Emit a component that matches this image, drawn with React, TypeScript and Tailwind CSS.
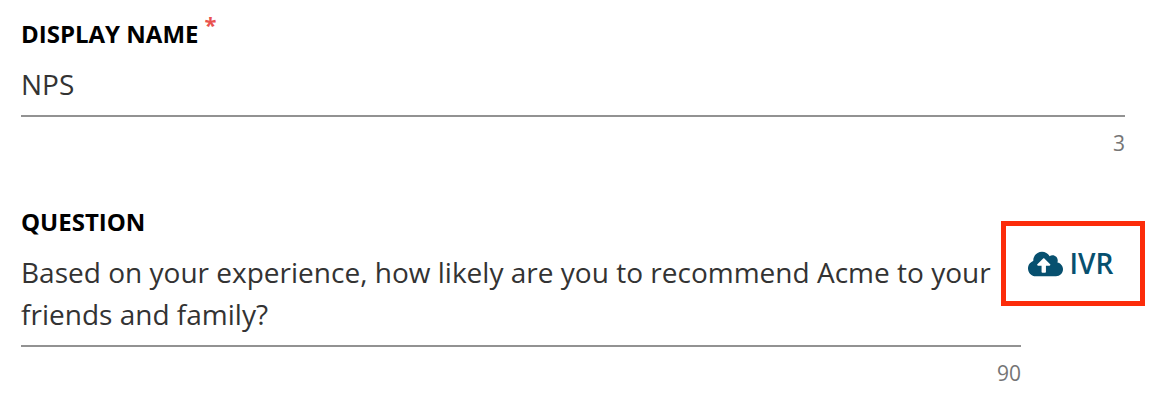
import { FaCloudUploadAlt } from "react-icons/fa";

type FieldProps = {
  label: string;
  value: string;
  count: number;
  required?: boolean;
};

function Field({ label, value, count, required }: FieldProps) {
  return (
    <div>
      <div className="flex h-8 items-center text-[24px] leading-8 font-bold text-black">
        <span>{label}</span>
        {required && <span className="ml-1.5 -mt-5 text-[22px] font-bold text-[#e9524f]">*</span>}
      </div>
      <div className="mt-[13px] border-b-2 border-[#929292] pb-[10px] text-[28px] leading-[42px] tracking-[0.01px] text-[#333]">
        {value}
      </div>
      <div className="mt-2.5 text-right text-[21px] leading-8 text-[#757575]">{count}</div>
    </div>
  );
}

export default function App() {
  return (
    <main className="h-[405px] w-[1159px] overflow-hidden bg-white pt-[18px] pl-[21px] font-['Open_Sans','Noto_Sans',sans-serif]">
      <div className="w-[1104px]">
        <Field label="DISPLAY NAME" value="NPS" count={3} required />
      </div>

      <div className="mt-[47px] flex items-start">
        <div className="w-[1000px] shrink-0">
          <Field
            label="QUESTION"
            value="Based on your experience, how likely are you to recommend Acme to your friends and family?"
            count={90}
          />
        </div>
        <button
          type="button"
          className="-ml-5 mt-[15px] flex h-[85px] w-[144px] shrink-0 items-center justify-center gap-[7px] border-[5px] border-[#fc2c0a] pr-[5px] pb-0.5 text-[28px] font-semibold text-[#07506f]"
        >
          <FaCloudUploadAlt className="mt-0.5 h-[28px] w-[35px]" />
          IVR
        </button>
      </div>
    </main>
  );
}
